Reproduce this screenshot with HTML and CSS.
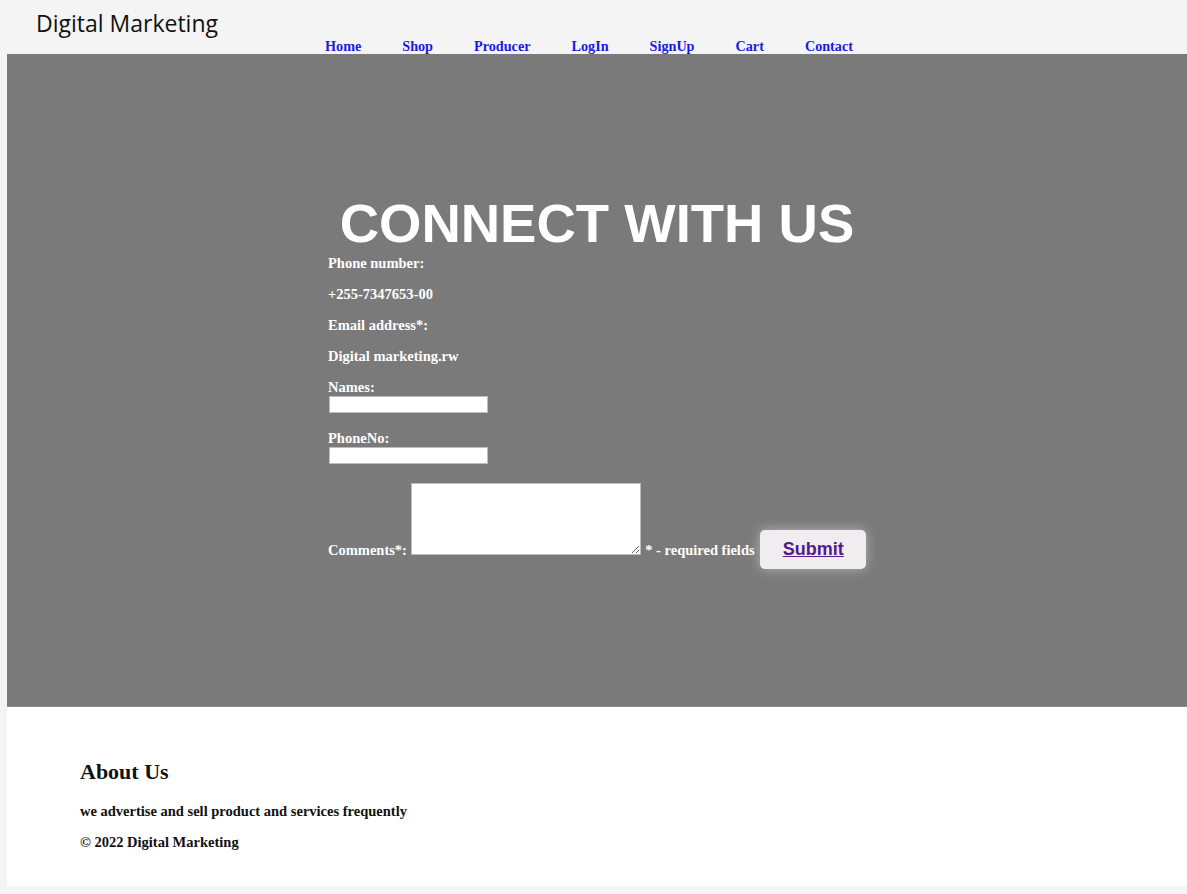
FILE: index.html
```html
<!DOCTYPE html>
<html>
<head>
<meta charset="utf-8">
<title>Digital Marketing</title>
<link rel="stylesheet" href="styles.css">
</head>
<body>
<header class="top">
  <div class="logo">Digital Marketing</div>
  <nav class="nav">
    <a href="#">Home</a>
    <a href="#">Shop</a>
    <a href="#">Producer</a>
    <a href="#">LogIn</a>
    <a href="#">SignUp</a>
    <a href="#">Cart</a>
    <a href="#">Contact</a>
  </nav>
</header>
<main class="contact">
  <h1 class="title">CONNECT WITH US</h1>
  <form class="form">
    <p class="line">Phone number:</p>
    <p class="line">+255-7347653-00</p>
    <p class="line">Email address*:</p>
    <p class="line">Digital marketing.rw</p>
    <div class="field">
      <label class="lbl">Names:</label>
      <input class="inp" type="text">
    </div>
    <div class="field">
      <label class="lbl">PhoneNo:</label>
      <input class="inp" type="text">
    </div>
    <div class="row">
      <label class="inline-lbl">Comments*:</label>
      <textarea class="area"></textarea>
      <span class="req">* - required fields</span>
      <button class="submit" type="button"><span class="submit-txt">Submit</span></button>
    </div>
  </form>
</main>
<footer class="foot">
  <h3 class="foot-title">About Us</h3>
  <p class="foot-text">we advertise and sell product and services frequently</p>
  <p class="foot-text">&copy; 2022 Digital Marketing</p>
</footer>
</body>
</html>
```
FILE: styles.css
```css
html, body {
  margin: 0;
  padding: 0;
}
body {
  background: #f4f4f4;
  font-family: "Liberation Serif", "Times New Roman", serif;
  padding-bottom: 7px;
}
.top {
  display: flex;
  align-items: flex-end;
  height: 54px;
}
.logo {
  align-self: flex-start;
  font-family: "Comic Sans MS", "Open Sans", sans-serif;
  font-size: 23px;
  color: #111;
  padding: 7px 0 0 36px;
  width: 289px;
}
.nav {
  display: flex;
  gap: 41px;
  padding-bottom: 0;
}
.nav a {
  color: #1a1ae6;
  text-decoration: none;
  font-weight: bold;
  font-size: 14.2px;
  line-height: 15px;
}
.contact {
  margin-left: 7px;
  background: #7a7a7a;
  height: 653px;
  box-sizing: border-box;
  padding-top: 140px;
  border-bottom: 1px solid #8c8c8c;
}
.title {
  margin: 0;
  text-align: center;
  color: #fff;
  font-family: "Liberation Sans", Arial, sans-serif;
  font-size: 54.5px;
  line-height: 60px;
  font-weight: bold;
}
.form {
  margin: 1px 0 0 321px;
  color: #fff;
  font-weight: bold;
  font-size: 14.5px;
}
.line {
  margin: 0 0 15px;
  line-height: 16px;
}
.field {
  margin-bottom: 17px;
}
.lbl {
  display: block;
  line-height: 17px;
}
.inp {
  display: block;
  box-sizing: border-box;
  width: 159px;
  height: 17px;
  margin: 0 0 0 1px;
  border: 1px solid #bdbdbd;
  background: #fff;
  padding: 0;
}
.row {
  padding-top: 2px;
  line-height: 16px;
}
.area {
  box-sizing: border-box;
  width: 230px;
  height: 72px;
  border: 1px solid #bdbdbd;
  background: #fff;
  margin: 0 1px 0 0;
  padding: 0;
  vertical-align: baseline;
}
.submit {
  width: 106px;
  height: 39px;
  margin-left: 2px;
  border: none;
  border-radius: 5px;
  background: #efedf0;
  box-shadow: 0 0 12px rgba(255, 255, 255, 0.45);
  font-family: "Liberation Sans", Arial, sans-serif;
  font-weight: bold;
  font-size: 18px;
  color: #551a8b;
  padding: 0;
}
.submit-txt {
  text-decoration: underline;
}
.foot {
  margin-left: 7px;
  background: #fff;
  height: 179px;
  box-sizing: border-box;
  padding: 52px 0 0 73px;
}
.foot-title {
  margin: 0 0 18px;
  font-size: 22px;
  line-height: 26px;
  color: #111;
}
.foot-text {
  margin: 0 0 15px;
  font-size: 14.5px;
  font-weight: bold;
  line-height: 16px;
  color: #111;
}
```
